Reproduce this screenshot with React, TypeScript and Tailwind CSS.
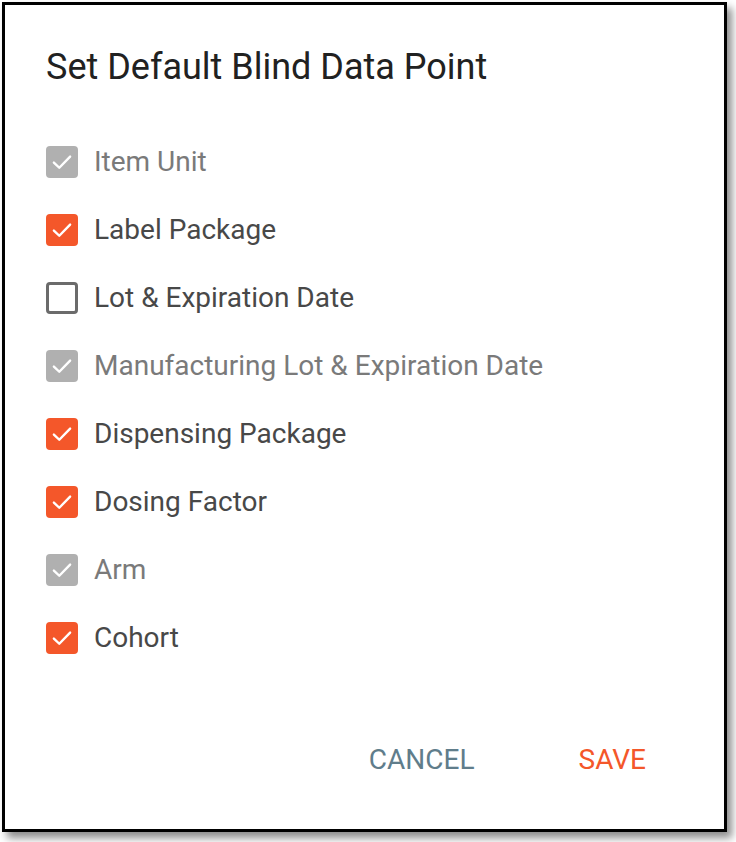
import React from "react";

type Item = { label: string; state: "disabled" | "checked" | "unchecked" };

const items: Item[] = [
  { label: "Item Unit", state: "disabled" },
  { label: "Label Package", state: "checked" },
  { label: "Lot & Expiration Date", state: "unchecked" },
  { label: "Manufacturing Lot & Expiration Date", state: "disabled" },
  { label: "Dispensing Package", state: "checked" },
  { label: "Dosing Factor", state: "checked" },
  { label: "Arm", state: "disabled" },
  { label: "Cohort", state: "checked" },
];

function Check() {
  return (
    <svg width="26" height="26" viewBox="0 0 24 24" fill="none">
      <path d="M4.5 12.5l5 4.8L19.5 7" stroke="white" strokeWidth="2.2" strokeLinecap="round" strokeLinejoin="round" />
    </svg>
  );
}

function Box({ state }: { state: Item["state"] }) {
  if (state === "unchecked") {
    return <div className="w-[32px] h-[32px] rounded-[4px] border-[3px] border-[#6b6b6b] bg-white shrink-0" />;
  }
  const bg = state === "checked" ? "bg-[#f4572a]" : "bg-[#b0b0b0]";
  return (
    <div className={`w-[32px] h-[32px] rounded-[4px] ${bg} flex items-center justify-center shrink-0`}>
      <Check />
    </div>
  );
}

export default function App() {
  return (
    <div className="w-[736px] h-[842px] bg-white" style={{ fontFamily: "Roboto, 'Liberation Sans', sans-serif" }}>
      <div className="ml-[2px] mt-[2px] w-[725px] h-[830px] border-[3px] border-black bg-white shadow-[5px_6px_8px_rgba(0,0,0,0.45)] flex flex-col">
        <h1 className="pl-[41px] pt-[42px] text-[36px] leading-[40px] text-[#212121] font-normal">
          Set Default Blind Data Point
        </h1>
        <div className="pl-[41px] pt-[59px] flex flex-col gap-[36px]">
          {items.map((it) => (
            <div key={it.label} className="flex items-center gap-[16px] h-[32px]">
              <Box state={it.state} />
              <span
                className={`text-[28px] leading-[32px] ${it.state === "disabled" ? "text-[#7a7a7a]" : "text-[#484848]"}`}
              >
                {it.label}
              </span>
            </div>
          ))}
        </div>
        <div className="mt-auto mb-[53px] flex justify-end pr-[78px] gap-[104px]">
          <button className="text-[28px] leading-[32px] text-[#607d8b] uppercase">Cancel</button>
          <button className="text-[28px] leading-[32px] text-[#f4572a] uppercase">Save</button>
        </div>
      </div>
    </div>
  );
}
